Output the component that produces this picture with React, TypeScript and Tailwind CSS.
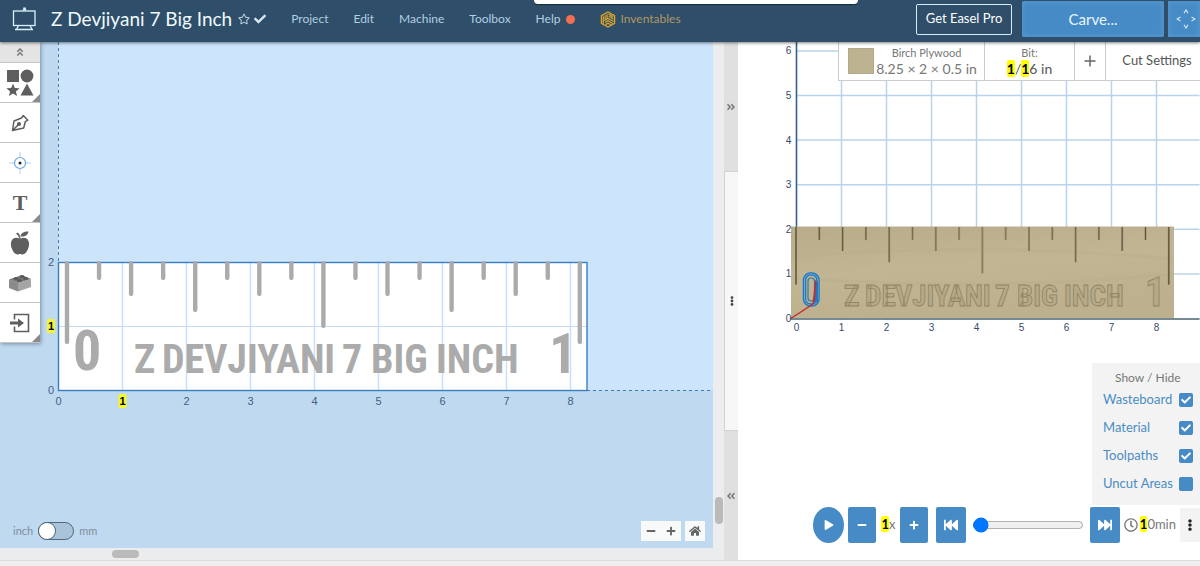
import { useState } from "react";
import type { ReactNode } from "react";
import clsx from "clsx";
import {
  FaAngleDoubleLeft,
  FaAngleDoubleRight,
  FaAngleDoubleUp,
  FaAppleAlt,
  FaCheck,
  FaEllipsisV,
  FaFastBackward,
  FaFastForward,
  FaHome,
  FaMinus,
  FaPlay,
  FaPlus,
  FaRegClock,
  FaRegStar,
} from "react-icons/fa";

const MENU = ["Project", "Edit", "Machine", "Toolbox"];

// tick length by position, in px of the 2D view (repeats mirrored around the middle)
const TICKS = [83, 19, 35, 19, 51, 19, 35, 19, 67, 19, 35, 19, 51, 19, 35, 19, 83];

// engraved words with their left edge in the 2D view and in the preview
const WORDS = [
  { text: "Z", x: 134, px: 106 },
  { text: "DEVJIYANI", x: 162, px: 127 },
  { text: "7", x: 342, px: 257 },
  { text: "BIG", x: 371, px: 279 },
  { text: "INCH", x: 436, px: 326 },
];

function Mark({ children }: { children: ReactNode }) {
  return <mark className="rounded-xs bg-[#ffff00] font-bold text-black">{children}</mark>;
}

function EaselLogo() {
  return (
    <svg viewBox="0 0 24 24" className="size-6" fill="none" stroke="#d9f1fa" strokeWidth="1.3">
      <rect x="1.5" y="4" width="21.5" height="14.5" />
      <path d="M3 22.5h18M6.5 18.5l-2 4M18 18.5l2 4" />
      <path d="M10 3.5h5l-1.2-1.3V.5h-2.6v1.7z" fill="#d9f1fa" stroke="none" />
    </svg>
  );
}

function InventablesLogo() {
  return (
    <svg viewBox="0 0 16 18" className="h-[17px] w-4" fill="none" stroke="#e0a526" strokeWidth="1.3">
      <path d="M8 1l7 4v8l-7 4-7-4V5z" />
      <path d="M3 5.5v8M5 4.5v5.5M7 3.5v5M8.5 3.2l5 3M8.8 5.6l5 2.8M4 10l4-2 6 3.2M5 12l3-1.6 5 2.8M5.5 14.4L8 13l3 1.6" />
    </svg>
  );
}

function MoveIcon() {
  return (
    <svg viewBox="0 0 20 20" className="size-5" fill="none" stroke="#d3e8f8" strokeWidth="1.2">
      <path d="M8 4.2L10 1l2 3.2M8 15.8l2 3.2 2-3.2M4.5 8L1 10l3.5 2M15.5 8l3.5 2-3.5 2" />
    </svg>
  );
}

function Header() {
  return (
    <header className="relative z-20 flex h-[42px] shrink-0 items-center bg-[#2e4e69] pb-1 shadow-[0_1px_3px_rgba(0,0,0,0.5)]">
      <div className="absolute top-0 left-[44.5%] h-1 w-[27%] rounded-b-sm bg-white shadow-[0_1px_1px_#17303f]" />
      <a href="#home" aria-label="Easel home" className="ml-3">
        <EaselLogo />
      </a>
      <h1 className="ml-[15px] text-[19px] whitespace-nowrap text-[#eefaff]">Z Devjiyani 7 Big Inch</h1>
      <button aria-label="Favorite" className="ml-1.5 text-[#b9d0e0]">
        <FaRegStar className="size-3" />
      </button>
      <FaCheck className="ml-1 size-3 text-[#d5e7f2]" />
      <nav className="ml-[25px] flex items-center gap-[25px] text-xs text-[#b3cfe1]">
        {MENU.map((item) => (
          <button key={item}>{item}</button>
        ))}
        <button className="flex items-center gap-1.5">
          Help
          <span className="size-[9px] rounded-full bg-[#ef6f4e]" />
        </button>
        <a href="#inventables" className="flex items-center gap-1 text-[#b39861]">
          <InventablesLogo />
          Inventables
        </a>
      </nav>
      <div className="ml-auto flex items-center">
        <button className="h-[31px] w-24 rounded-xs border border-[#d5ecfa] text-[13px] whitespace-nowrap text-white">
          Get Easel Pro
        </button>
        <button className="ml-2.5 h-9 w-[142px] rounded-xs bg-[#468bc6] text-[15px] text-[#e9f6ff] shadow-[inset_0_0_6px_#5d9cd2]">
          Carve...
        </button>
        <button
          aria-label="Jog machine"
          className="ml-1 flex h-9 w-8 items-center justify-end bg-[#468bc6] pr-1 shadow-[inset_0_0_6px_#5d9cd2]"
        >
          <MoveIcon />
        </button>
      </div>
    </header>
  );
}

function ToolButton({ label, more, children }: { label: string; more?: boolean; children: ReactNode }) {
  return (
    <button
      aria-label={label}
      className="relative flex h-10 w-full items-center justify-center border-b border-[#c6c6c6] bg-white text-[#5f5f5f]"
    >
      {children}
      {more && (
        <svg viewBox="0 0 8 8" className="absolute right-0 bottom-0 size-2">
          <path d="M8 0v8H0z" fill="#8a8a8a" />
        </svg>
      )}
    </button>
  );
}

function Toolbar() {
  return (
    <div className="relative w-10 shadow-[1px_1px_4px_rgba(0,0,0,0.35)]">
      <button
        aria-label="Collapse tools"
        className="flex h-[21px] w-full items-center justify-center border-b border-[#c6c6c6] bg-[#e4e4e4] text-[#777]"
      >
        <FaAngleDoubleUp className="size-2.5" />
      </button>
      <ToolButton label="Shapes" more>
        <svg viewBox="0 0 28 28" className="size-7" fill="#5f5f5f">
          <rect x="1" y="1" width="12" height="12" />
          <circle cx="21" cy="7" r="6.4" />
          <path d="M7 14.5l1.8 4.4 4.8.4-3.7 3.1 1.2 4.7L7 24.6l-4.1 2.5 1.2-4.7-3.7-3.1 4.8-.4z" />
          <path d="M21 14.5l6.5 12h-13z" />
        </svg>
      </ToolButton>
      <ToolButton label="Pen">
        <svg viewBox="0 0 18 18" className="size-[18px]" fill="none" stroke="#5f5f5f" strokeWidth="1.5" strokeLinejoin="round">
          <path d="M1.5 16.5L3 7l7.500-3 1.800-2.500 4.500 4.700-2.500 1.500-1.600 6.300zM1.500 16.500l6-6" />
          <circle cx="8" cy="10" r="1.3" fill="#5f5f5f" />
        </svg>
      </ToolButton>
      <ToolButton label="Drill point">
        <svg viewBox="0 0 22 22" className="size-[22px]" fill="none">
          <path d="M11 0v5M11 17v5M0 11h5M17 11h5" stroke="#a9cdf2" />
          <circle cx="11" cy="11" r="5.5" stroke="#6aa5e8" strokeWidth="1.2" />
          <circle cx="11" cy="11" r="1.5" fill="#222" />
        </svg>
      </ToolButton>
      <ToolButton label="Text" more>
        <span className="font-['Liberation_Serif',serif] text-[22px] font-bold">T</span>
      </ToolButton>
      <ToolButton label="Icons">
        <svg viewBox="0 0 20 24" className="h-6 w-5" fill="#5f5f5f">
          <path d="M10 8c2-1.500 4.500-1.800 6.500-.5 3 2 3.200 6.500 1.500 10.500-1.300 3-3.300 5.500-5.500 5.500-1 0-1.500-.5-2.500-.5s-1.500.5-2.500.5C5.300 23.500 3.300 21 2 18 .3 14 .5 9.500 3.500 7.500 5.500 6.200 8 6.500 10 8z" />
          <path d="M10.500 5.500C11 2 14 .3 18.500.5 18 4 15 6 10.500 5.500z" />
          <path d="M6 2.500l2-1q2.500 2.500 2.800 6.500H9.500Q9 5 6 2.500z" />
        </svg>
      </ToolButton>
      <ToolButton label="Apps">
        <svg viewBox="0 0 24 18" className="h-[18px] w-6">
          <path d="M1 5.500L10 9v8.500L1 14z" fill="#8a8a8a" />
          <path d="M10 9l13-4v8l-13 4.500z" fill="#a5a5a5" />
          <path d="M1 5.500L14 1l9 4-13 4z" fill="#787878" />
          <g fill="#555">
            <ellipse cx="8" cy="4.5" rx="2.5" ry="1.3" />
            <ellipse cx="14" cy="2.5" rx="2.5" ry="1.3" />
            <ellipse cx="11.5" cy="6.5" rx="2.5" ry="1.3" />
            <ellipse cx="17.5" cy="4.5" rx="2.5" ry="1.3" />
          </g>
        </svg>
      </ToolButton>
      <ToolButton label="Import" more>
        <svg viewBox="0 0 20 20" className="size-5" fill="none" stroke="#5f5f5f" strokeWidth="1.6">
          <path d="M4.500 6.500V1.500h14v17h-14v-5" />
          <path d="M0 10h9" strokeWidth="3" />
          <path d="M8 5.500l6 4.500-6 4.500z" fill="#5f5f5f" stroke="none" />
        </svg>
      </ToolButton>
    </div>
  );
}

function AxisLabel({ x, y, value, marked }: { x: number; y: number; value: number; marked?: boolean }) {
  return (
    <>
      {marked && <rect x={x - 4} y={y - 11} width="8" height="14" rx="1.5" fill="#f6f62c" />}
      <text x={x} y={y} textAnchor="middle" fill={marked ? "#000" : "#3f5f85"} fontWeight={marked ? 700 : 400}>
        {value}
      </text>
    </>
  );
}

function DesignCanvas() {
  const inches = [0, 1, 2, 3, 4, 5, 6, 7, 8];
  return (
    <svg
      className="absolute inset-0 h-full w-full font-['Liberation_Sans',sans-serif] text-[11px]"
      role="img"
      aria-label="Ruler design"
    >
      <rect x="58" width="100%" height="348" fill="#cce5fd" />
      <path d="M58.5 0v220" stroke="#3f7fb8" strokeDasharray="3 3" />
      <line x1="587" y1="348.5" x2="100%" y2="348.5" stroke="#3f7fb8" strokeDasharray="3 3" />
      <rect x="58.5" y="220.5" width="528.5" height="128" fill="#fff" />
      <path d="M59 284.5h528" stroke="#c3dcf3" />
      {inches.slice(1).map((n) => (
        <path key={n} d={`M${58.5 + 64 * n} 221v127`} stroke="#c9e0f6" strokeWidth="1.5" />
      ))}
      <rect x="58.5" y="220.5" width="528.5" height="128" fill="none" stroke="#3a7fbe" strokeWidth="1.4" />
      {TICKS.map((len, i) => (
        <rect key={i} x={64.8 + 32.05 * i} y="219" width="4.4" height={len} rx="2" fill="#ababab" />
      ))}
      <g fill="#ababab" className="font-['Roboto_Condensed',Roboto,sans-serif] font-bold">
        <text x="73" y="328" className="text-[56px]">0</text>
        {WORDS.map((w) => (
          <text key={w.text} x={w.x} y="331" className="text-[40px]">
            {w.text}
          </text>
        ))}
        <text x="549" y="331" className="text-[56px]">1</text>
      </g>
      {inches.map((n) => (
        <AxisLabel key={n} x={58.5 + 64 * n} y={363} value={n} marked={n === 1} />
      ))}
      {[0, 1, 2].map((n) => (
        <AxisLabel key={n} x={51} y={352 - 64 * n} value={n} marked={n === 1} />
      ))}
    </svg>
  );
}

function UnitToggle() {
  const [metric, setMetric] = useState(false);
  return (
    <label className="flex cursor-pointer items-center gap-[5px] text-[11px] text-[#7d8f9b]">
      inch
      <input
        type="checkbox"
        role="switch"
        aria-label="Use millimetres"
        checked={metric}
        onChange={(e) => setMetric(e.target.checked)}
        className="peer sr-only"
      />
      <span
        className={clsx(
          "flex h-[18px] w-9 items-center rounded-full border border-[#50687a] bg-[#a9c3da]",
          metric && "justify-end",
        )}
      >
        <span className="size-4 rounded-full bg-white ring-1 ring-[#50687a]" />
      </span>
      mm
    </label>
  );
}

function Editor() {
  return (
    <section className="flex min-w-0">
      <div className="flex min-w-0 flex-1 flex-col">
        <div className="flex min-h-0 flex-1">
          <div className="relative flex min-w-0 flex-1 flex-col justify-between bg-[#bfd9f0]">
            <DesignCanvas />
            <Toolbar />
            <div className="relative flex items-center justify-between pr-2 pb-[7px] pl-[13px]">
              <UnitToggle />
              <div className="flex gap-1 text-[#666]">
                <div className="flex h-5 bg-[#f8fafa]">
                  <button aria-label="Zoom out" className="grid w-5 place-items-center">
                    <FaMinus className="size-2.5" />
                  </button>
                  <button aria-label="Zoom in" className="grid w-5 place-items-center">
                    <FaPlus className="size-2.5" />
                  </button>
                </div>
                <button aria-label="Reset view" className="grid size-5 place-items-center bg-[#f8fafa]">
                  <FaHome className="size-3" />
                </button>
              </div>
            </div>
          </div>
          <div className="flex w-[11px] flex-col items-center justify-end bg-[#ebedef] pb-6">
            <div className="h-[27px] w-2 rounded-full bg-[#bababa]" />
          </div>
        </div>
        <div className="flex h-3 items-center bg-[#ebecee] pl-[112px]">
          <div className="h-2 w-[27px] rounded-full bg-[#bababa]" />
        </div>
      </div>
      <div className="flex w-3.5 flex-col text-[#777]">
        <button aria-label="Expand editor" className="grid flex-1 place-items-center bg-[#e0e0e0]">
          <FaAngleDoubleRight className="size-2.5" />
        </button>
        <div className="grid flex-2 place-items-center border-y border-l border-[#d2d2d2] bg-[#f7f7f7] text-[#444]">
          <FaEllipsisV className="size-2.5" />
        </div>
        <button aria-label="Expand preview" className="grid flex-1 place-items-center bg-[#e0e0e0]">
          <FaAngleDoubleLeft className="size-2.5" />
        </button>
      </div>
    </section>
  );
}

function PreviewCanvas() {
  const cols = [0, 1, 2, 3, 4, 5, 6, 7, 8];
  const rows = [0, 1, 2, 3, 4, 5, 6];
  return (
    <svg
      className="absolute inset-0 h-full w-full font-['Liberation_Sans',sans-serif] text-[10px]"
      role="img"
      aria-label="Carve preview"
    >
      <defs>
        <linearGradient id="wood" x1="0" y1="0" x2="0.3" y2="1">
          <stop offset="0" stopColor="#b9ac8b" />
          <stop offset="0.5" stopColor="#c1b594" />
          <stop offset="1" stopColor="#bcb08e" />
        </linearGradient>
      </defs>
      {cols.map((n) => (
        <path key={n} d={`M${58.5 + 45 * n} 0v277`} stroke="#b8d3eb" strokeWidth="1.5" />
      ))}
      {rows.slice(1).map((n) => (
        <line key={n} x1="59" x2="100%" y1={276.5 - 44.6 * n} y2={276.5 - 44.6 * n} stroke="#b8d3eb" strokeWidth="1.5" />
      ))}
      <path d="M58.5 0v185" stroke="#36618c" strokeWidth="1.5" />
      <line x1="53" x2="100%" y1="277" y2="277" stroke="#47636f" strokeWidth="1.5" />
      <path d="M53 184.5h383v91.500H53z" fill="url(#wood)" />
      <path d="M53 215q180-16 383 2M53 236q200 14 383-4" stroke="#b5a886" strokeWidth="3" fill="none" opacity="0.2" />
      {TICKS.map((len, i) => {
        const x = 58 + 23.3 * i;
        const end = 184.5 + len * 0.7;
        const far = Math.abs(i - 8) / 8;
        return (
          <g key={i}>
            <path d={`M${x} 185V${end}`} stroke="#938868" strokeWidth="2" />
            <path d={`M${x} 185V${end}`} stroke="#4e4733" strokeWidth="1" opacity={0.15 + far * 0.75} />
          </g>
        );
      })}
      <g
        className="font-['Roboto_Condensed',Roboto,sans-serif] font-bold"
        fill="#b5a987"
        stroke="#8f8465"
        strokeWidth="0.8"
      >
        {WORDS.map((w) => (
          <text key={w.text} x={w.px} y="264" className="text-[29px]">
            {w.text}
          </text>
        ))}
        <text x="407" y="264" className="text-[40px]">1</text>
      </g>
      <g fill="none">
        <rect x="66.5" y="232" width="13.5" height="31" rx="6" stroke="#1f79c0" strokeWidth="3.5" />
        <rect x="66.5" y="232" width="13.5" height="31" rx="6" stroke="#8fc0df" strokeWidth="0.7" />
        <path d="M78 240v20" stroke="#1f79c0" strokeWidth="4" />
        <rect x="70" y="236" width="6.5" height="23" rx="3" stroke="#2b78ae" strokeWidth="1.2" />
        <path d="M52 277l23-15 3-24-2 22" stroke="#c8282c" strokeWidth="1.3" />
      </g>
      <g fill="#34496b" textAnchor="middle">
        {cols.map((n) => (
          <text key={n} x={58.5 + 45 * n} y="289">
            {n}
          </text>
        ))}
        {rows.map((n) => (
          <text key={n} x="50.5" y={280 - 44.6 * n}>
            {n}
          </text>
        ))}
      </g>
    </svg>
  );
}

function MaterialBar() {
  return (
    <div className="relative flex h-[39px] self-end border-b border-l border-[#ccc] bg-white text-[#777]">
      <button className="flex w-[145px] items-center justify-center gap-0.5 pl-0.5 whitespace-nowrap">
        <span className="size-[26px] border border-[#b3a98a] bg-[#beb391]" />
        <span className="flex flex-col items-center">
          <span className="text-[11px] leading-4">Birch Plywood</span>
          <span className="text-sm leading-4">8.25 × 2 × 0.5 in</span>
        </span>
      </button>
      <button className="flex w-[90px] flex-col items-center justify-center border-l border-[#ccc]">
        <span className="text-[11px] leading-4">Bit:</span>
        <span className="text-sm leading-4 text-[#555]">
          <Mark>1</Mark>/<Mark>1</Mark>6 in
        </span>
      </button>
      <button aria-label="Add bit" className="grid w-[31px] place-items-center border-l border-[#ccc]">
        <svg viewBox="0 0 12 12" className="size-3" stroke="#666" strokeWidth="1.5">
          <path d="M6 .5v11M.5 6h11" />
        </svg>
      </button>
      <button className="w-[95px] border-l border-[#ccc] pl-2 text-[13px] whitespace-nowrap text-[#555]">Cut Settings</button>
    </div>
  );
}

function ShowHide() {
  const [layers, setLayers] = useState([
    { name: "Wasteboard", on: true },
    { name: "Material", on: true },
    { name: "Toolpaths", on: true },
    { name: "Uncut Areas", on: false },
  ]);

  const toggle = (name: string) =>
    setLayers(layers.map((l) => (l.name === name ? { ...l, on: !l.on } : l)));

  return (
    <fieldset
      aria-label="Preview layers"
      className="flex w-[108px] flex-col self-end bg-[#f3f3f3] pt-1.5 pr-[7px] pb-[7px] pl-[11px] text-[13px]"
    >
      <span className="pl-3 text-xs leading-[17px] text-[#777]">Show / Hide</span>
      {layers.map((layer) => (
        <label key={layer.name} className="flex h-7 items-center justify-between whitespace-nowrap text-[#4a8dc4]">
          {layer.name}
          <span className="relative grid place-items-center">
            <input
              type="checkbox"
              checked={layer.on}
              onChange={() => toggle(layer.name)}
              className="size-3.5 appearance-none rounded-xs bg-[#468bc6]"
            />
            {layer.on && <FaCheck className="pointer-events-none absolute size-2.5 text-white" />}
          </span>
        </label>
      ))}
    </fieldset>
  );
}

function Playback() {
  const [progress, setProgress] = useState(1);
  return (
    <div className="flex items-center pl-[75px] text-[13px] text-[#777]">
      <button aria-label="Play" className="grid h-9 w-[31px] place-items-center rounded-[50%] bg-[#468bc6] text-white">
        <FaPlay className="size-2.5" />
      </button>
      <button aria-label="Slower" className="ml-1 grid h-9 w-7 place-items-center rounded-xs bg-[#468bc6] text-white">
        <FaMinus className="size-2.5" />
      </button>
      <span className="w-6 text-center">
        <Mark>1</Mark>x
      </span>
      <button aria-label="Faster" className="grid h-9 w-7 place-items-center rounded-xs bg-[#468bc6] text-white">
        <FaPlus className="size-2.5" />
      </button>
      <button aria-label="To start" className="ml-2 grid h-9 w-[30px] place-items-center rounded-xs bg-[#468bc6] text-white">
        <FaFastBackward className="size-3.5" />
      </button>
      <input
        type="range"
        aria-label="Simulation progress"
        value={progress}
        onChange={(e) => setProgress(Number(e.target.value))}
        className="mx-1.5 h-3.5 min-w-0 flex-1"
      />
      <button aria-label="To end" className="grid h-9 w-[30px] place-items-center rounded-xs bg-[#468bc6] text-white">
        <FaFastForward className="size-3.5" />
      </button>
      <FaRegClock className="ml-1 size-3.5" />
      <span className="ml-0.5">
        <Mark>1</Mark>0min
      </span>
      <button aria-label="More" className="ml-1 grid h-[34px] w-5 place-items-center bg-[#f3f3f3] text-[#222]">
        <FaEllipsisV className="size-3" />
      </button>
    </div>
  );
}

function Preview() {
  return (
    <section className="relative flex min-w-0 flex-col justify-between overflow-hidden bg-white pb-[17px]">
      <PreviewCanvas />
      <MaterialBar />
      <div className="relative flex flex-col gap-0.5">
        <ShowHide />
        <Playback />
      </div>
    </section>
  );
}

export default function App() {
  return (
    <div className="flex h-screen min-h-[480px] flex-col bg-[#eeeeee] font-[Lato,sans-serif]">
      <Header />
      <main className="grid min-h-0 flex-1 grid-cols-[8fr_5fr]">
        <Editor />
        <Preview />
      </main>
      <footer className="h-1.5 shrink-0 border-t border-[#dddddd] bg-[#eeeeee]" />
    </div>
  );
}
